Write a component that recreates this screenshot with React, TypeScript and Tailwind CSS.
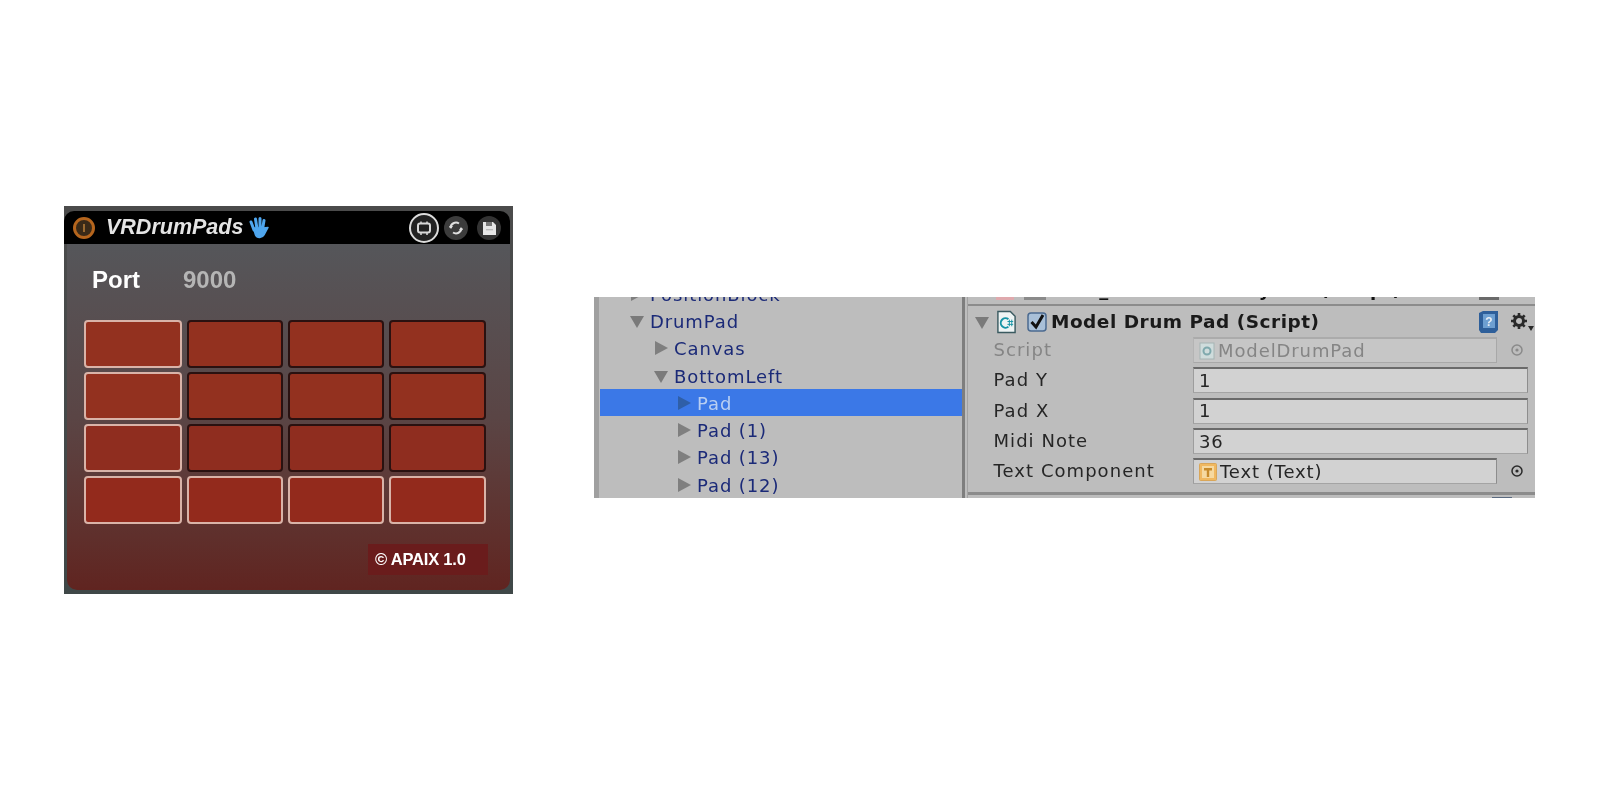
import React from "react";

const pads = [
  [1, 0, 0, 0],
  [1, 0, 0, 0],
  [1, 0, 0, 0],
  [1, 1, 1, 1],
];

function Tri({ open, dark }: { open?: boolean; dark?: boolean }) {
  return (
    <svg width="16" height="16" viewBox="0 0 16 16" className="shrink-0">
      {open ? (
        <path d="M1 3 H15 L8 15 Z" fill="#7a7a7a" />
      ) : (
        <path d="M2 1 L15 8 L2 15 Z" fill={dark ? "#2f5fa8" : "#7f7f7f"} />
      )}
    </svg>
  );
}

function TreeRow({ label, indent, open, selected }: { label: string; indent: string; open?: boolean; selected?: boolean }) {
  return (
    <div className={`h-[27.3px] flex items-center gap-[5px] ${indent} ${selected ? "bg-[#3b78e7] text-[#b9cff2]" : "text-[#1b2a78]"}`}>
      <Tri open={open} dark={selected} />
      <span className="whitespace-nowrap pt-[2px] tracking-[0.9px]">{label}</span>
    </div>
  );
}

function Field({ children, short, muted }: { children: React.ReactNode; short?: boolean; muted?: boolean }) {
  return (
    <div
      className={`h-[26px] flex items-center gap-[3px] pl-[5px] border-t-2 border-l border-r border-b tracking-[0.9px] ${short ? "w-[304px]" : "w-[335px]"} ${
        muted
          ? "bg-[#c6c6c6] text-[#858585] border-t-[#ababab] border-l-[#b4b4b4] border-r-[#a8a8a8] border-b-[#a8a8a8]"
          : "bg-[#d2d2d2] text-[#262626] border-t-[#6a6a6a] border-l-[#9d9d9d] border-r-[#8d8d8d] border-b-[#a4a4a4]"
      }`}
    >
      {children}
    </div>
  );
}

function Row({ label, muted, children, dot }: { label: string; muted?: boolean; children: React.ReactNode; dot?: "light" | "dark" }) {
  return (
    <div className="h-[30.3px] flex items-center">
      <span className={`w-[206px] pl-[6.5px] whitespace-nowrap tracking-[1.05px] ${muted ? "text-[#858585]" : "text-[#262626]"}`}>{label}</span>
      {children}
      {dot && (
        <svg width="14" height="14" viewBox="0 0 14 14" className="ml-[13px] shrink-0">
          <circle cx="7" cy="7" r="5" fill="none" stroke={dot === "dark" ? "#2a2a2a" : "#8a8a8a"} strokeWidth="1.5" />
          <circle cx="7" cy="7" r="1.6" fill={dot === "dark" ? "#2a2a2a" : "#8a8a8a"} />
        </svg>
      )}
    </div>
  );
}

export default function App() {
  return (
    <div className="w-[1600px] h-[800px] bg-white flex items-start overflow-hidden">
      {/* VRDrumPads device */}
      <div className="ml-[64px] mt-[206px] w-[449px] h-[388px] shrink-0 flex flex-col bg-gradient-to-b from-[#4b4b4b] to-[#3f4848] pt-[5px] pb-[4px] [font-family:'Liberation_Sans',Arial,sans-serif] blur-[0.5px]">
        <div className="h-[33px] mr-[3px] bg-black rounded-t-[10px] flex items-center pl-[8px] pr-[9px] shrink-0">
          <svg width="24" height="24" viewBox="0 0 24 24" className="shrink-0">
            <circle cx="12" cy="12" r="9.5" fill="#3a2a18" stroke="#b5651d" strokeWidth="3" />
            <rect x="11" y="8" width="2" height="8" fill="#9a6a30" />
          </svg>
          <span className="ml-[10px] text-[21.5px] leading-none font-bold italic text-[#e4e4e4]">VRDrumPads</span>
          <svg width="22" height="24" viewBox="0 0 22 24" className="ml-[5px] shrink-0" fill="none" stroke="#4fa6ee" strokeLinecap="round">
            <path d="M3 6 L6 14 M7.5 3 L9 13 M12 2.5 L12 13 M16 4.5 L14.5 13.5" strokeWidth="3" />
            <path d="M5.5 12 H15 L20 11.5 L16 19 C14.5 22 9 22.5 7.5 19 Z" fill="#4fa6ee" strokeWidth="1.5" strokeLinejoin="round" />
          </svg>
          <div className="ml-auto flex items-center">
            <div className="w-[30px] h-[30px] rounded-full border-2 border-[#dcdcdc] bg-[#222] flex items-center justify-center">
              <svg width="18" height="18" viewBox="0 0 18 18" fill="none" stroke="#d8d8d8" strokeWidth="2">
                <rect x="3" y="4.5" width="12" height="9" rx="2" />
                <path d="M6 2.5 V4.5 M12 2.5 V4.5 M6 13.5 V16 M12 13.5 V16" strokeWidth="1.5" />
              </svg>
            </div>
            <div className="ml-[5px] w-[24px] h-[24px] rounded-full bg-[#3c3c3c] flex items-center justify-center">
              <svg width="16" height="16" viewBox="0 0 16 16" fill="none" stroke="#e0e0e0" strokeWidth="2">
                <path d="M2.5 8 A5.5 5.5 0 0 1 11 3.5" />
                <path d="M13.5 8 A5.5 5.5 0 0 1 5 12.5" />
                <path d="M1 6 L3 9 L5 6 Z M11 10 L13 7 L15 10 Z" fill="#e0e0e0" stroke="none" />
              </svg>
            </div>
            <div className="ml-[9px] w-[24px] h-[24px] rounded-full bg-[#333] flex items-center justify-center">
              <svg width="16" height="16" viewBox="0 0 16 16">
                <path d="M2 2 H12 L15 5 V15 H2 Z" fill="#e6e6e6" />
                <rect x="5" y="2" width="6" height="4" fill="#777" />
                <rect x="5" y="9" width="7" height="1.4" fill="#bbb" />
              </svg>
            </div>
          </div>
        </div>

        <div className="flex-1 mx-[3px] flex flex-col rounded-b-[10px] bg-gradient-to-b from-[#55565a] via-[#5a4545] to-[#602420] overflow-hidden">
          <div className="flex items-center h-[32px] mt-[20px] pl-[25px] text-[24px] font-bold shrink-0">
            <span className="text-white">Port</span>
            <span className="ml-[43px] text-[#b5b5b5]">9000</span>
          </div>

          <div className="mt-[24px] ml-[17px] grid grid-cols-[98px_96px_96px_97px] grid-rows-[48px_48px_48px_48px] gap-x-[5px] gap-y-[4px] shrink-0">
            {pads.flat().map((lit, i) => (
              <div
                key={i}
                className={`rounded-[4px] border-2 ${i > 11 ? "bg-[#932a1c]" : i > 7 ? "bg-[#8f2d1f]" : "bg-[#93311f]"} ${lit ? "border-[#d9b3a8]" : "border-[#2a1110]"}`}
              />
            ))}
          </div>

          <div className="mt-[20px] ml-[301px] w-[120px] h-[31px] bg-[#6a1c1c] flex items-center pl-[7px] text-[16.5px] font-bold text-white whitespace-nowrap tracking-[-0.2px]">
            © APAIX 1.0
          </div>
        </div>
      </div>

      {/* Unity editor capture */}
      <div className="ml-[81px] mt-[297px] w-[941px] h-[201px] shrink-0 bg-[#bdbdbd] flex overflow-hidden text-[18px] leading-none [font-family:'DejaVu_Sans',Verdana,sans-serif] blur-[0.4px]">
        {/* Hierarchy */}
        <div className="w-[368px] h-full shrink-0 border-l-[5px] border-[#a0a0a0] pl-px">
          <div className="-mt-[17px]">
            <TreeRow label="PositionBlock" indent="pl-[29px]" />
            <TreeRow label="DrumPad" indent="pl-[29px]" open />
            <TreeRow label="Canvas" indent="pl-[53px]" />
            <TreeRow label="BottomLeft" indent="pl-[53px]" open />
            <TreeRow label="Pad" indent="pl-[76px]" selected />
            <TreeRow label="Pad (1)" indent="pl-[76px]" />
            <TreeRow label="Pad (13)" indent="pl-[76px]" />
            <TreeRow label="Pad (12)" indent="pl-[76px]" />
          </div>
        </div>
        {/* Divider */}
        <div className="w-[6px] h-full shrink-0 bg-[#bdbdbd] border-l-[3px] border-r border-l-[#7e7e7e] border-r-[#a3a3a3]" />
        {/* Inspector */}
        <div className="flex-1 min-w-0 h-full flex flex-col">
          <div className="h-[9px] shrink-0 border-b-2 border-[#8c8c8c] overflow-hidden flex items-start">
            <div className="ml-[28px] w-[18px] h-[3px] shrink-0 bg-[#dfa9ad]" />
            <div className="ml-[10px] w-[22px] h-[3px] shrink-0 bg-[#8a8a8a]" />
            <div className="-mt-[16px] ml-[14px] font-bold text-[#111] whitespace-nowrap tracking-[0.5px]">Box_Collider Ctrl Hybrid (Script)</div>
            <div className="ml-auto mr-[36px] w-[20px] h-[3px] shrink-0 bg-[#6a6a6a]" />
          </div>
          <div className="h-[29px] shrink-0 flex items-center pt-[3px] pl-[6px] pr-[1px]">
            <Tri open />
            <svg width="21" height="24" viewBox="0 0 22 24" className="ml-[6px] shrink-0">
              <path d="M2 1 H15 L20 6 V23 H2 Z" fill="#eef4f4" stroke="#3a5a60" strokeWidth="1.5" />
              <path d="M13 9 A5 5 0 1 0 13 17" fill="none" stroke="#1693a5" strokeWidth="2" />
              <path d="M12 11.5 H18 M12 14.5 H18 M14 9.5 V16.5 M16.5 9.5 V16.5" stroke="#1693a5" strokeWidth="1" />
            </svg>
            <svg width="20" height="20" viewBox="0 0 20 20" className="ml-[10px] shrink-0">
              <rect x="1" y="1" width="18" height="18" rx="3" fill="#a9c0d8" stroke="#4b6a90" strokeWidth="1.5" />
              <path d="M4.5 10 L9 15 L16 3" fill="none" stroke="#111" strokeWidth="3" />
            </svg>
            <span className="ml-[4px] font-bold text-[#1a1a1a] whitespace-nowrap text-[18.5px] tracking-[0.5px]">Model Drum Pad (Script)</span>
            <svg width="22" height="24" viewBox="0 0 22 24" className="ml-auto shrink-0">
              <path d="M1 3 L5 1 H20 V20 L17 23 H3 L1 20 Z" fill="#2e5f9a" />
              <rect x="5" y="4" width="12" height="14" fill="#6d9fd1" />
              <text x="11" y="16" fontSize="12" fontWeight="700" textAnchor="middle" fill="#e8eef5" fontFamily="'Liberation Sans', sans-serif">?</text>
            </svg>
            <svg width="24" height="20" viewBox="0 0 24 20" className="ml-[10px] shrink-0">
              <circle cx="9" cy="9" r="4.5" fill="none" stroke="#2a2a2a" strokeWidth="3" />
              <path
                d="M9 1 V4 M9 14 V17 M1 9 H4 M14 9 H17 M3.3 3.3 L5.5 5.5 M12.5 12.5 L14.7 14.7 M14.7 3.3 L12.5 5.5 M5.5 12.5 L3.3 14.7"
                stroke="#2a2a2a"
                strokeWidth="2.6"
              />
              <path d="M18 14 H24 L21 19 Z" fill="#2a2a2a" />
            </svg>
          </div>
          <div className="flex flex-col ml-[19px]">
            <Row label="Script" muted dot="light">
              <Field short muted>
                <svg width="16" height="18" viewBox="0 0 16 18" className="shrink-0">
                  <rect x="1" y="1" width="14" height="16" fill="#cfdcdc" stroke="#a6b4b4" />
                  <circle cx="8" cy="9" r="3.5" fill="none" stroke="#7fa9ad" strokeWidth="2" />
                </svg>
                <span>ModelDrumPad</span>
              </Field>
            </Row>
            <Row label="Pad Y"><Field>1</Field></Row>
            <Row label="Pad X"><Field>1</Field></Row>
            <Row label="Midi Note"><Field>36</Field></Row>
            <Row label="Text Component" dot="dark">
              <Field short>
                <svg width="18" height="18" viewBox="0 0 18 18" className="shrink-0">
                  <rect x="0.5" y="0.5" width="17" height="17" rx="1" fill="#f0b860" stroke="#d9a659" />
                  <rect x="3" y="3" width="12" height="12" fill="#f6d9a0" />
                  <path d="M5 5 H13 V7.5 H10.2 V14 H7.8 V7.5 H5 Z" fill="#c78a2a" />
                </svg>
                <span>Text (Text)</span>
              </Field>
            </Row>
          </div>
          <div className="mt-[6px] h-[3px] shrink-0 bg-[#8c8c8c]" />
          <div className="mt-[2px] ml-[524px] w-[20px] h-[2px] shrink-0 bg-[#5a6a80]" />
        </div>
      </div>
    </div>
  );
}
